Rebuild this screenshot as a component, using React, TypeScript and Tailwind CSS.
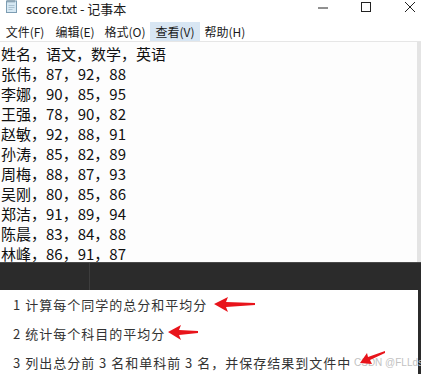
import React from "react";

const rows = [
  "姓名，语文，数学，英语",
  "张伟，87，92，88",
  "李娜，90，85，95",
  "王强，78，90，82",
  "赵敏，92，88，91",
  "孙涛，85，82，89",
  "周梅，88，87，93",
  "吴刚，80，85，86",
  "郑洁，91，89，94",
  "陈晨，83，84，88",
  "林峰，86，91，87",
];

const menus = ["文件(F)", "编辑(E)", "格式(O)", "查看(V)", "帮助(H)"];

const tasks = [
  "1 计算每个同学的总分和平均分",
  "2 统计每个科目的平均分",
  "3 列出总分前 3 名和单科前 3 名，并保存结果到文件中",
];

function NotepadIcon() {
  return (
    <svg width="13" height="14" viewBox="0 0 13 14">
      <rect x="1.5" y="2" width="10" height="11.5" fill="#d6e8f3" stroke="#7d9db3" />
      <path d="M3 1v2.5M5 1v2.5M7 1v2.5M9 1v2.5" stroke="#6f8797" strokeWidth="1" />
      <path d="M3.5 6.5h6M3.5 8.5h6M3.5 10.5h4" stroke="#9fb8c8" strokeWidth="0.8" />
    </svg>
  );
}

function Arrows() {
  return (
    <svg className="pointer-events-none absolute left-0 top-0" width="421" height="374" viewBox="0 0 421 374">
      <polygon points="214,304 228,297 226,302 255,303 255,305 226,307 228,312" fill="#e8141b" />
      <polygon points="168,332 181,325 179,330 198,331 198,333 179,335 181,340" fill="#e8141b" />
      <polygon points="360,363 367,353 368,357 385,351 385,353 370,360 372,364" fill="#e8141b" />
    </svg>
  );
}

export default function App() {
  return (
    <div className="relative flex h-[374px] w-[421px] flex-col overflow-hidden bg-white font-['Noto_Sans_CJK_SC',sans-serif]">
      {/* title bar */}
      <div className="flex h-[22px] shrink-0 items-start">
        <div className="ml-[5px] mt-[-1px]">
          <NotepadIcon />
        </div>
        <span className="ml-[8px] text-[13px] leading-[17px] text-[#1a1a1a]">score.txt - 记事本</span>
        <div className="ml-auto flex items-start">
          <svg className="mr-[33px] mt-[7px]" width="10" height="2" viewBox="0 0 10 2">
            <path d="M0 1h10" stroke="#222" strokeWidth="1" />
          </svg>
          <svg className="mr-[34px] mt-[2px]" width="10" height="10" viewBox="0 0 10 10">
            <rect x="0.5" y="0.5" width="9" height="9" fill="none" stroke="#222" />
          </svg>
          <svg className="mr-[6px] mt-[2px]" width="10" height="10" viewBox="0 0 10 10">
            <path d="M0 0L10 10M10 0L0 10" stroke="#222" strokeWidth="1" />
          </svg>
        </div>
      </div>

      {/* menu bar */}
      <div className="flex h-[19px] shrink-0 items-stretch text-[12px] text-[#1a1a1a]">
        {menus.map((m) => (
          <div
            key={m}
            className={`flex w-[50px] items-center justify-center leading-none ${m === "查看(V)" ? "bg-[#d8e6f3]" : ""}`}
          >
            {m}
          </div>
        ))}
      </div>

      {/* editor */}
      <div className="flex h-[221px] shrink-0 border-t border-[#e6e6e6] bg-[#fdfdfd]">
        <div className="flex-1 overflow-hidden pl-[1px] pt-[2px] text-[15px] leading-[20px] text-[#111]">
          {rows.map((r) => (
            <div key={r} className="whitespace-nowrap">
              {r}
            </div>
          ))}
        </div>
        <div className="w-[4px] bg-[#e4e4e4]" />
      </div>

      {/* dark strip */}
      <div className="flex h-[28px] shrink-0 border-t border-[#4a4a4a] bg-[#2b2b2b]">
        <div className="w-[89px]" />
        <div className="w-px bg-[#3d3d3d]" />
      </div>

      {/* task list */}
      <div className="flex flex-1">
        <div className="flex-1 pl-[13px] text-[13px] leading-[29px] tracking-[1px] text-[#333]">
          {tasks.map((t) => (
            <div key={t} className="whitespace-nowrap">
              {t}
            </div>
          ))}
        </div>
        <div className="w-[3px] bg-[#2b2b2b]" />
      </div>

      <span className="absolute left-[354px] top-[357px] whitespace-nowrap font-['Liberation_Sans',sans-serif] text-[10px] leading-[12px] text-[#c2c2c2]">
        CSDN @FLLdsj
      </span>
      <Arrows />
    </div>
  );
}
